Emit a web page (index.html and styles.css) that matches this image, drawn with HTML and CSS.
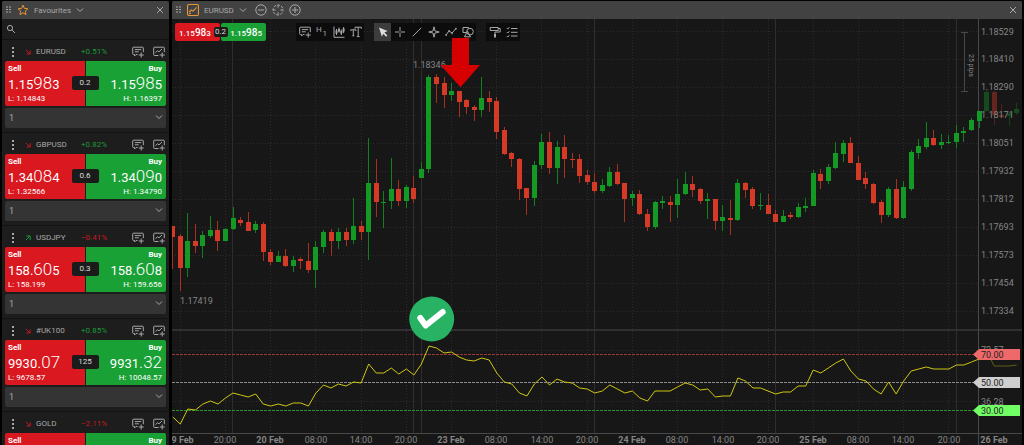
FILE: index.html
```html
<!DOCTYPE html>
<html lang="en">

<head>
    <meta charset="utf-8">
    <meta name="viewport" content="width=device-width,initial-scale=1.0">
    <title>EURUSD</title>
    <link rel="stylesheet" href="styles.css">
</head>

<body>
    <!-- shared icons -->
    <svg class="sprite" aria-hidden="true">
        <symbol id="i-grip" viewBox="0 0 6 8"><path d="M0 1h2M3 1h2M0 3.5h2M3 3.5h2M0 6h2M3 6h2" /></symbol>
        <symbol id="i-chevron" viewBox="0 0 8 8"><path d="M1 2.5l3 3 3-3" /></symbol>
        <symbol id="i-close" viewBox="0 0 8 8"><path d="M1 1l6 6M7 1l-6 6" /></symbol>
        <symbol id="i-star" viewBox="0 0 12 12"><path d="M6 1.2l1.4 3.2 3.5.4-2.6 2.3.7 3.5-3-1.8-3 1.8.7-3.5L1.1 4.8l3.5-.4z" /></symbol>
        <symbol id="i-search" viewBox="0 0 10 10"><circle cx="4" cy="4" r="2.6" /><path d="M6 6l3 3" /></symbol>
        <symbol id="i-dots" viewBox="0 0 4 10"><path d="M1 1h2M1 5h2M1 9h2" /></symbol>
        <symbol id="i-down" viewBox="0 0 6 6"><path d="M.8.8l4 4M1.6 5h3.6V1.2" /></symbol>
        <symbol id="i-up" viewBox="0 0 6 6"><path d="M.8 5.2l4-4M1.2 1h4v4" /></symbol>
        <symbol id="i-note" viewBox="0 0 12 12"><path d="M5.5 8.5H4L2.5 10V8.5h-1a.8.8 0 0 1-.8-.8V2a.8.8 0 0 1 .8-.8h9a.8.8 0 0 1 .8.8v4.2M2.8 3.6h6.4M2.8 5.8h4M9.2 6.5v5M6.7 9h5" /></symbol>
        <symbol id="i-chartadd" viewBox="0 0 12 12"><path d="M5.5 9.5h-4a.8.8 0 0 1-.8-.8V2a.8.8 0 0 1 .8-.8h9a.8.8 0 0 1 .8.8v4.2M2.5 6.6l2-1.8 1.5 1 3-2.8M9.2 6.5v5M6.7 9h5" /></symbol>
        <symbol id="i-chart" viewBox="0 0 11 11"><rect x=".5" y=".5" width="10" height="10" rx="1" /><path d="M2 7.5l2-2 1.6 1L8.8 3M2 9.2l1.5-1" /></symbol>
        <symbol id="i-minus" viewBox="0 0 12 12"><circle cx="6" cy="6" r="5.2" /><path d="M3 6h6" /></symbol>
        <symbol id="i-target" viewBox="0 0 12 12"><circle cx="6" cy="6" r="5" stroke-dasharray="2.7 1.227" stroke-dashoffset="1.35" /><path d="M6 1v2.600M6 8.400V11M1 6h2.600M8.400 6H11" /></symbol>
        <symbol id="i-plus" viewBox="0 0 12 12"><circle cx="6" cy="6" r="5.2" /><path d="M3 6h6M6 3v6" /></symbol>
        <symbol id="i-candles" viewBox="0 0 12 12"><path d="M1 .5v10.8h10.5M3.5 3v6M6 1.5v5M8.3 3.5V9M10.6 1v6" /><path class="thick" d="M3.5 4.5v3M6 3v2.5M8.3 5v2.6M10.6 2.5v3" /></symbol>
        <symbol id="i-text" viewBox="0 0 12 12"><path d="M.8 5V3.8h5V5M3.3 3.8v6M2.3 9.8h2M5 2.8V1.2h6.4v1.6M8.2 1.2v9.4M6.8 10.6h2.8" /></symbol>
        <symbol id="i-cursor" viewBox="0 0 12 12"><path class="fill" d="M2 1.5l8.6 3.6-3.2 1.4 3 3-1.2 1.2-3-3-1.3 3z" /></symbol>
        <symbol id="i-cross" viewBox="0 0 12 12"><path d="M6 1v4M6 7v4M1 6h4M7 6h4M5.5 6h1" /></symbol>
        <symbol id="i-line" viewBox="0 0 12 12"><path d="M1.8 10.2l8.4-8.4" /></symbol>
        <symbol id="i-spark" viewBox="0 0 12 12"><path d="M6 .8l1 4.2 4.2 1L7 7l-1 4.2L5 7 .8 6 5 5z" /></symbol>
        <symbol id="i-poly" viewBox="0 0 12 12"><path d="M1 9l3-4 3 2 4-4.5" /><path class="thick" d="M.5 9h1.2M3.5 5h1.2M6.5 7.2h1.2M10.3 2.8h1.2" /></symbol>
        <symbol id="i-shapes" viewBox="0 0 12 12"><path d="M4.5 6.5H1v-5h5.5v1.2M5.5 5.2l-3 5.6h6z" /><circle cx="8" cy="5.6" r="3.3" /></symbol>
        <symbol id="i-roller" viewBox="0 0 12 12"><path d="M1.2 1.5h8v3h-8zM9.2 2.5h2V6H6v2" /><path class="thick" d="M6 8v3.5" /></symbol>
        <symbol id="i-checks" viewBox="0 0 12 12"><path d="M.8 2l1 1L3.4 1.2M.8 6l1 1 1.6-1.8M.8 10l1 1 1.6-1.8M5 2.5h6.5M5 6.3h6.5M5 10h6.5" /></symbol>
    </svg>

    <aside class="panel watchlist">
        <header class="bar">
            <svg class="icon grip"><use href="#i-grip" /></svg>
            <svg class="icon star"><use href="#i-star" /></svg>
            <button class="title">Favourites <svg class="icon chev"><use href="#i-chevron" /></svg></button>
            <button class="close" aria-label="Close favourites"><svg class="icon small"><use href="#i-close" /></svg></button>
        </header>
        <label class="search">
            <svg class="icon lens"><use href="#i-search" /></svg>
            <input type="text" aria-label="Search">
        </label>
        <ul id="symbols"></ul>
    </aside>

    <main class="panel chart">
        <header class="bar">
            <svg class="icon grip"><use href="#i-grip" /></svg>
            <svg class="icon star"><use href="#i-chart" /></svg>
            <button class="title">EURUSD <svg class="icon chev"><use href="#i-chevron" /></svg></button>
            <button class="zoom" aria-label="Zoom out"><svg class="icon"><use href="#i-minus" /></svg></button>
            <button class="zoom" aria-label="Reset"><svg class="icon"><use href="#i-target" /></svg></button>
            <button class="zoom" aria-label="Zoom in"><svg class="icon"><use href="#i-plus" /></svg></button>
            <button class="close" aria-label="Close chart"><svg class="icon small"><use href="#i-close" /></svg></button>
        </header>
        <div class="canvas">
            <svg id="plot" viewBox="172 19 850 426" preserveAspectRatio="xMinYMin meet"></svg>
            <div class="overlay">
                <div class="quick">
                    <button class="sell">1.15<b>98</b>3</button>
                    <span class="spread">0.2</span>
                    <button class="buy">1.15<b>98</b>5</button>
                </div>
                <div class="tools">
                    <button aria-label="New order"><svg class="icon"><use href="#i-note" /></svg></button>
                    <button class="period"><span>H</span><span>1</span></button>
                    <button aria-label="Chart type"><svg class="icon"><use href="#i-candles" /></svg></button>
                    <button aria-label="Text size"><svg class="icon"><use href="#i-text" /></svg></button>
                </div>
                <div class="tools">
                    <button class="active" aria-label="Pointer"><svg class="icon"><use href="#i-cursor" /></svg></button>
                    <button aria-label="Crosshair"><svg class="icon"><use href="#i-cross" /></svg></button>
                    <button aria-label="Line"><svg class="icon"><use href="#i-line" /></svg></button>
                    <button aria-label="Marker"><svg class="icon"><use href="#i-spark" /></svg></button>
                    <button aria-label="Polyline"><svg class="icon"><use href="#i-poly" /></svg></button>
                    <button aria-label="Shapes"><svg class="icon"><use href="#i-shapes" /></svg></button>
                </div>
                <div class="tools">
                    <button aria-label="Style"><svg class="icon"><use href="#i-roller" /></svg></button>
                    <button aria-label="Objects"><svg class="icon"><use href="#i-checks" /></svg></button>
                </div>
            </div>
            <svg class="marks" viewBox="172 19 850 426" preserveAspectRatio="xMinYMin meet">
                <path fill="#d60000" d="M452 38h17v27h11l-19.500 22.300L440.500 65H452z" />
                <circle cx="431.700" cy="319" r="22.500" fill="#27b264" />
                <path d="M420.300 318l5.400 7.500 17-13.500" fill="none" stroke="#fff" stroke-width="6" stroke-linecap="round" stroke-linejoin="round" />
            </svg>
        </div>
    </main>

    <script src="script.js"></script>
</body>

</html>
```
FILE: styles.css
```css
* {
    box-sizing: border-box;
}

body {
    margin: 0;
    padding: 1px 2px 0;
    height: 100vh;
    display: flex;
    gap: 3px;
    overflow: hidden;
    background: #000;
    color: #a8a8a8;
    font-family: Roboto, "Liberation Sans", sans-serif;
    font-size: 8px;
}

button,
input,
select {
    font: inherit;
    color: inherit;
    background: none;
    border: none;
    padding: 0;
    margin: 0;
    outline: none;
}

button {
    cursor: pointer;
}

.sprite {
    position: absolute;
    width: 0;
    height: 0;
}

.icon {
    width: 12px;
    height: 12px;
    flex: none;
    display: block;
    fill: none;
    stroke: currentColor;
    stroke-width: 1;
}

.thick {
    stroke-width: 2;
}

.fill {
    fill: currentColor;
    stroke: none;
}

.panel {
    display: flex;
    flex-direction: column;
    background: #1d1d1d;
    overflow: hidden;
}

.watchlist {
    flex: 0 0 167px;
}

.chart {
    flex: 1;
    min-width: 0;
    background: #171717;
}

.bar {
    display: flex;
    align-items: center;
    flex: none;
    height: 18px;
    padding: 0 5px 0 4px;
    background: #424242;
    border-radius: 2px 2px 0 0;
}

.grip {
    width: 6px;
    height: 8px;
    margin-right: 5px;
}

.star {
    margin-right: 5px;
    color: #e8963a;
}

.title {
    display: flex;
    align-items: center;
    gap: 5px;
    margin-right: 8px;
}

.chev,
.small {
    width: 8px;
    height: 8px;
}

.zoom {
    margin-right: 5px;
}

.close {
    margin-left: auto;
}

.search {
    display: flex;
    align-items: center;
    flex: none;
    height: 20px;
    padding-left: 4px;
}

.lens {
    width: 10px;
    height: 10px;
}

.search input {
    flex: 1;
    min-width: 0;
}

#symbols {
    list-style: none;
    margin: 0;
    padding: 0;
}

#symbols li {
    padding: 0 3px 4px;
    border-top: 1px solid #121212;
}

.head {
    display: flex;
    align-items: center;
    height: 21px;
    padding: 2px 1px 0 6px;
}

.dots {
    width: 4px;
    height: 10px;
    stroke-width: 2;
    margin-right: 10px;
}

.dir {
    width: 6px;
    height: 6px;
    margin-right: 5px;
}

.name {
    width: 45px;
}

.change {
    margin-right: auto;
}

.head button {
    margin-left: 9px;
}

.up {
    color: #1c9a38;
}

.down {
    color: #c5191f;
}

.tiles {
    position: relative;
    display: grid;
    grid-template-columns: 1fr 1fr;
    gap: 1px;
    height: 45px;
    margin-bottom: 2px;
}

.tiles button {
    display: flex;
    flex-direction: column;
    justify-content: space-between;
    align-items: flex-start;
    padding: 3px 4px 2px 3px;
    border-radius: 2px 0 0 2px;
    color: #fff;
    line-height: 10px;
}

.tiles .buy {
    align-items: flex-end;
    border-radius: 0 2px 2px 0;
}

.sell {
    background: #d91820;
}

.buy {
    background: #1aa135;
}

.price {
    font-size: 13px;
    line-height: 17px;
}

.price span {
    font-size: 17px;
    font-weight: 300;
}

.spread {
    position: absolute;
    left: 50%;
    top: 15px;
    width: 27px;
    height: 14px;
    margin-left: -14px;
    border-radius: 2px;
    background: #1b1b1b;
    color: #ddd;
    line-height: 14px;
    text-align: center;
}

.lots {
    position: relative;
    height: 20px;
    border-radius: 2px;
    background: #343434;
}

.lots select {
    appearance: none;
    width: 100%;
    height: 100%;
    padding: 0 4px;
    font-size: 9px;
}

.lots .chev {
    position: absolute;
    right: 3px;
    top: 5px;
    pointer-events: none;
}

.canvas {
    position: relative;
    flex: 1;
    min-height: 0;
}

#plot,
.marks {
    display: block;
    width: 100%;
    height: 100%;
}

.marks {
    position: absolute;
    left: 0;
    top: 0;
    pointer-events: none;
}

.overlay {
    position: absolute;
    left: 3px;
    top: 4px;
    display: flex;
    gap: 10px;
}

.quick {
    position: relative;
    display: flex;
    gap: 1px;
    margin-right: 20px;
}

.quick button {
    width: 45px;
    height: 18px;
    border-radius: 2px;
    color: #fff;
    font-weight: 500;
    text-align: left;
    padding: 0 4px;
}

.quick .buy {
    text-align: right;
}

.quick b {
    font-size: 10px;
    font-weight: 500;
}

.quick .spread {
    top: 4px;
    width: 14px;
    height: 10px;
    margin-left: -7px;
    line-height: 10px;
}

.tools {
    display: flex;
    height: 18px;
    background: #0c0c0c;
}

.tools button {
    display: flex;
    align-items: center;
    justify-content: center;
    width: 17px;
}

.tools .active {
    background: #3c3c3c;
    color: #ddd;
}

.tools .period {
    gap: 1px;
    align-items: flex-start;
    padding: 3px 0;
    line-height: 8px;
}

.period span:last-child {
    align-self: flex-end;
}

/* plot */
.grid {
    stroke: #2b2b2b;
    stroke-dasharray: 1 2;
}

.day {
    stroke: #2e2e2e;
}

.axis {
    stroke: #484848;
}

.divider {
    stroke: #303030;
    stroke-width: 2;
}

.level {
    stroke-dasharray: 3 1;
}

#plot text {
    fill: #858585;
    font-size: 9px;
}

#plot .date {
    font-weight: 700;
}

#plot .tag {
    fill: #222;
}

#plot .pips {
    font-size: 7px;
}

.bull {
    fill: #149a24;
}

.bear {
    fill: #d43a26;
}

.bull.wick {
    fill: #12801f;
}

.bear.wick {
    fill: #a83020;
}

.faded {
    opacity: .4;
}

.rsi {
    fill: none;
    stroke: #d0c712;
}
```
FILE: script.js
```js
const symbols = [
    ["EURUSD", "down", "+0.51%", ["1.15", "98", "3"], ["1.15", "98", "5"], "0.2", "1.14843", "1.16397"],
    ["GBPUSD", "down", "+0.82%", ["1.34", "08", "4"], ["1.34", "09", "0"], "0.6", "1.32566", "1.34790"],
    ["USDJPY", "up", "−0.41%", ["158.", "60", "5"], ["158.", "60", "8"], "0.3", "158.199", "159.656"],
    ["#UK100", "down", "+0.85%", ["9930", ".07", ""], ["9931", ".32", ""], "125", "9678.57", "10048.57"],
    ["GOLD", "down", "−2.11%"]
];

// a symbol without quotes yet only shows its Sell / Buy captions
const quote = (p, extreme) => p ? `<span class="price">${p[0]}<span>${p[1]}</span>${p[2]}</span><span>${extreme}</span>` : "";

document.getElementById("symbols").innerHTML = symbols.map(([name, dir, change, sell, buy, spread, low, high]) => `
    <li>
        <div class="head">
            <svg class="icon dots"><use href="#i-dots" /></svg>
            <svg class="icon dir ${dir}"><use href="#i-${dir}" /></svg>
            <span class="name">${name}</span>
            <span class="change ${change[0] == "+" ? "up" : "down"}">${change}</span>
            <button aria-label="New order ${name}"><svg class="icon"><use href="#i-note" /></svg></button>
            <button aria-label="Open chart ${name}"><svg class="icon"><use href="#i-chartadd" /></svg></button>
        </div>
        <div class="tiles">
            <button class="sell"><b>Sell</b>${quote(sell, "L: " + low)}</button>
            <button class="buy"><b>Buy</b>${quote(buy, "H: " + high)}</button>
            ${spread ? `<span class="spread">${spread}</span>` : ""}
        </div>
        ${spread ? `<div class="lots">
            <select aria-label="Lots ${name}"><option>1</option></select>
            <svg class="icon chev"><use href="#i-chevron" /></svg>
        </div>` : ""}
    </li>`).join("");

// candles: colour, body top, body bottom, high, low
const candles = [
    ["r", 226, 237, 226, 269], ["r", 236, 268, 234, 291], ["g", 241, 268, 213, 277], ["r", 241, 246, 224, 253],
    ["g", 235, 246, 231, 258], ["g", 230, 236, 216, 238], ["r", 230, 241, 221, 251], ["g", 229, 241, 228, 241],
    ["g", 218, 229, 207, 230], ["r", 220, 223, 217, 226], ["r", 222, 231, 212, 231], ["g", 224, 230, 221, 233],
    ["r", 224, 252, 222, 261], ["r", 252, 262, 249, 265], ["g", 256, 262, 251, 262], ["r", 256, 266, 249, 267],
    ["g", 260, 266, 256, 272], ["r", 259, 261, 257, 269], ["r", 261, 270, 243, 273], ["g", 247, 270, 241, 288],
    ["g", 232, 247, 230, 253], ["r", 232, 241, 229, 256], ["g", 232, 241, 228, 249], ["r", 232, 240, 228, 246],
    ["g", 226, 240, 198, 244], ["r", 226, 232, 221, 240], ["g", 183, 232, 138, 260], ["r", 183, 202, 159, 217],
    ["g", 202, 203, 191, 228], ["g", 189, 201, 158, 209], ["r", 189, 201, 180, 206], ["g", 187, 201, 185, 208],
    ["r", 188, 199, 176, 203], ["g", 169, 178, 162, 178], ["g", 77, 169, 75, 173], ["r", 77, 84, 74, 103],
    ["r", 83, 95, 77, 108], ["g", 91, 95, 83, 101], ["r", 91, 102, 91, 117], ["r", 100, 107, 99, 114],
    ["r", 107, 110, 105, 121], ["g", 98, 110, 77, 117], ["r", 98, 102, 91, 112], ["r", 101, 132, 97, 139],
    ["r", 130, 154, 127, 155], ["r", 153, 159, 152, 167], ["r", 159, 189, 158, 200], ["r", 188, 198, 188, 215],
    ["g", 165, 198, 161, 206], ["g", 142, 165, 134, 169], ["r", 142, 168, 132, 174], ["g", 147, 168, 141, 184],
    ["r", 147, 159, 135, 178], ["r", 159, 160, 153, 168], ["r", 159, 176, 154, 183], ["r", 175, 182, 170, 185],
    ["r", 182, 191, 173, 193], ["g", 185, 191, 179, 193], ["g", 172, 186, 167, 187], ["r", 172, 184, 164, 185],
    ["r", 183, 199, 183, 222], ["g", 194, 198, 191, 206], ["r", 194, 214, 190, 215], ["r", 214, 227, 209, 231],
    ["g", 202, 227, 201, 229], ["g", 201, 203, 196, 209], ["r", 202, 205, 196, 222], ["g", 194, 205, 179, 218],
    ["g", 184, 194, 172, 195], ["r", 184, 190, 176, 197], ["r", 189, 201, 188, 204], ["g", 199, 201, 193, 219],
    ["r", 199, 221, 199, 230], ["g", 217, 221, 205, 231], ["r", 218, 220, 200, 235], ["g", 183, 220, 179, 221],
    ["r", 183, 190, 182, 198], ["r", 189, 206, 187, 209], ["g", 205, 206, 193, 210], ["r", 205, 214, 194, 214],
    ["r", 214, 222, 210, 222], ["g", 216, 222, 210, 222], ["r", 215, 217, 212, 219], ["g", 207, 217, 203, 218],
    ["g", 206, 208, 198, 212], ["g", 173, 206, 170, 206], ["r", 174, 181, 169, 189], ["g", 167, 181, 164, 184],
    ["g", 153, 168, 142, 169], ["g", 143, 154, 140, 162], ["r", 143, 163, 137, 163], ["r", 163, 180, 156, 180],
    ["r", 178, 184, 172, 189], ["r", 184, 203, 183, 204], ["r", 202, 215, 200, 223], ["g", 189, 215, 187, 217],
    ["r", 189, 218, 179, 219], ["g", 187, 218, 181, 219], ["g", 152, 189, 150, 191], ["g", 146, 153, 139, 159],
    ["g", 138, 147, 122, 149], ["r", 138, 145, 130, 146], ["g", 142, 145, 134, 149], ["g", 142, 143, 135, 144],
    ["g", 133, 142, 125, 148], ["g", 131, 133, 127, 142], ["g", 120, 130, 118, 131], ["g", 111, 121, 111, 128],
    ["g", 92, 111, 89, 112], ["r", 92, 115, 91, 125], ["r", 115, 117, 104, 118], ["g", 113, 116, 112, 126],
    ["g", 109, 113, 103, 115]
];

const rsi = [
    417, 424, 409, 410, 404, 401, 404, 398, 393, 395, 397, 394, 404, 406, 404, 406, 403, 403, 406, 393,
    385, 388, 384, 386, 382, 383, 364, 373, 373, 368, 374, 369, 375, 364, 346, 348, 353, 352, 357, 360,
    361, 358, 360, 373, 382, 384, 393, 396, 384, 377, 385, 379, 382, 383, 388, 389, 393, 391, 385, 389,
    393, 391, 398, 401, 391, 391, 391, 387, 383, 385, 390, 389, 397, 396, 396, 378, 381, 388, 388, 391,
    394, 392, 392, 386, 386, 370, 373, 368, 363, 359, 371, 379, 381, 389, 394, 382, 394, 381, 371, 369,
    367, 369, 369, 369, 365, 365, 362, 359, 350, 366, 366, 366, 365
];

const prices = ["1.18529", "1.18410", "1.18290", "1.18171", "1.18051", "1.17932", "1.17812", "1.17693", "1.17573", "1.17454", "1.17334"];
const times = ["19 Feb", "20:00", "20 Feb", "08:00", "14:00", "20:00", "23 Feb", "08:00", "14:00", "20:00", "24 Feb", "08:00", "14:00", "20:00", "25 Feb", "08:00", "14:00", "20:00", "26 Feb"];
const levels = [["70.00", 354, "#ee6a6a", "#9c3838"], ["50.00", 382, "#cfcfcf", "#8a8a8a"], ["30.00", 410, "#72ff66", "#2f8f2c"]];

const STEP = 7.535;
const AXIS_X = 978.5;
const barX = (i) => 180.3 + (i - 1) * STEP;
const line = (cls, x1, y1, x2, y2) => `<line class="${cls}" x1="${x1}" y1="${y1}" x2="${x2}" y2="${y2}" />`;

let out = "";

// grid
times.forEach((t, i) => {
    const x = Math.floor(180.3 + i * STEP * 6) + 0.5;
    if (x < AXIS_X) out += line("grid", x, 19, x, 433);
});
prices.forEach((p, i) => {
    const y = Math.round(31 + i * 27.95) + 0.5;
    out += line("grid", 172, y, AXIS_X, y);
});
out += line("grid", 172, 350.5, AXIS_X, 350.5) + line("grid", 172, 401.5, AXIS_X, 401.5);
[232.5, 413.5, 421.5, 594.5, 775.5, 956.5].forEach((x) => out += line("day", x, 19, x, 433));
out += line("divider", 172, 330, 1022, 330);
out += line("axis", 172, 433.5, 1022, 433.5) + line("axis", AXIS_X, 19, AXIS_X, 445);

// rsi levels
levels.forEach(([label, y, color, stroke]) => {
    out += `<line class="level" x1="172" y1="${y + 0.5}" x2="975" y2="${y + 0.5}" stroke="${stroke}" />`;
});

// candles, those past the axis are faded
candles.forEach(([c, top, bottom, high, low], i) => {
    const x = barX(i);
    const cls = c == "g" ? "bull" : "bear";
    out += `<g class="${x > 980 ? "faded" : ""}">
        <rect class="${cls} wick" x="${Math.floor(x)}" y="${high}" width="1" height="${low - high}" />
        <rect class="${cls}" x="${Math.floor(x) - 2}" y="${top}" width="5" height="${Math.max(bottom - top, 1)}" />
    </g>`;
});

const points = rsi.map((y, i) => `${barX(i).toFixed(1)},${y}`);
out += `<polyline class="rsi" points="${points.slice(0, 108).join(" ")}" />`;
out += `<polyline class="rsi faded" points="${points.slice(107).join(" ")}" />`;

// labels
prices.forEach((p, i) => out += `<text x="981" y="${Math.round(34.5 + i * 27.95)}">${p}</text>`);
times.forEach((t, i) => {
    const cls = t.includes("Feb") ? "date" : "";
    out += `<text class="${cls}" x="${Math.round(180 + i * STEP * 6)}" y="443" text-anchor="middle">${t}</text>`;
});
out += `<text x="981" y="353">72.57</text><text x="981" y="405">36.28</text>`;
out += `<text x="413" y="68">1.18346</text><text x="180" y="304">1.17419</text>`;
levels.forEach(([label, y, color]) => {
    out += `<path fill="${color}" d="M973 ${y + 0.5}l6-5.500h41v11h-41z" /><text class="tag" x="981" y="${y + 4}">${label}</text>`;
});

// 25 pips ruler
out += `<path class="axis" fill="none" d="M961 32.500h7M961 91.500h7M964.500 32.500v59" />`;
out += `<text class="pips" transform="translate(969 54) rotate(90)">25 pips</text>`;

document.getElementById("plot").innerHTML = out;
```
